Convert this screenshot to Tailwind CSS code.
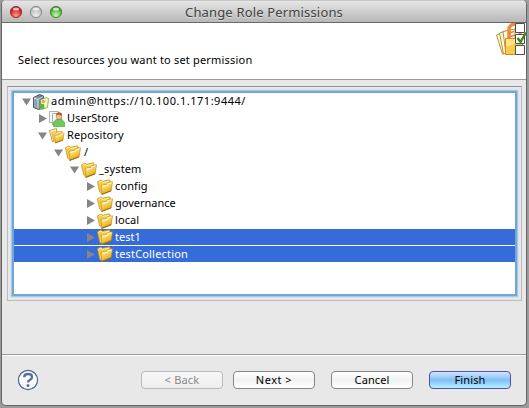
<!DOCTYPE html>
<html lang="en">
<head>
<meta charset="utf-8">
<title>Change Role Permissions</title>
<script src="https://cdn.jsdelivr.net/npm/@tailwindcss/browser@4"></script>
</head>
<body class="h-[408px] w-[529px] overflow-hidden bg-[#9b9b9b] font-['Noto_Sans','Open_Sans',sans-serif] text-[11px] text-black">
<svg class="absolute h-0 w-0" aria-hidden="true">
  <defs>
    <linearGradient id="gold" x1="0" y1="0" x2=".5" y2="1"><stop offset="0" stop-color="#fdeb96"/><stop offset=".45" stop-color="#f9d95c"/><stop offset="1" stop-color="#e0a01a"/></linearGradient>
    <linearGradient id="server" x1="0" y1="0" x2="1" y2="0"><stop offset="0" stop-color="#9fb2bf"/><stop offset="1" stop-color="#54697a"/></linearGradient>
    <symbol id="folder" viewBox="0 0 16 16">
      <path d="M.4 2.800 4 1l1.500 1.200L12.500.8l1.200 3L5 15.300 2.600 13z" fill="#f5cb48" stroke="#c08c18" stroke-width=".7"/>
      <path d="M1.500 3.500 4 2l1.500 1.500 6.500-1.200" fill="none" stroke="#fff2ae" stroke-width=".9"/>
      <path d="M4 6.400 9.600 5.400l1.200-1.800 4.700-.8-1.300 8.900L5 15.500z" fill="url(#gold)" stroke="#b98314" stroke-width=".6"/>
      <path d="m5 7.200 5-.8 1.300-1.900 3.300-.5" fill="none" stroke="#fffbe0" stroke-width="1.100"/>
      <path d="m4.800 15.300 9.400-3.500" stroke="#96660a"/>
    </symbol>
    <symbol id="down" viewBox="0 0 9 8"><path d="M0 .5h9L4.500 7.500z" fill="#858585"/></symbol>
    <symbol id="right" viewBox="0 0 8 9"><path d="M0 0v9l8-4.500z" fill="#858585"/></symbol>
  </defs>
</svg>
<div class="flex h-[408px] w-[529px] flex-col pr-[2px] pb-[2px] pl-[1px]">
<main class="flex h-[406px] w-[526px] flex-col overflow-hidden rounded-t-[5px] rounded-b-[5px] border-x border-b border-[#656565] bg-[#e8e8e8]">
  <header class="relative flex h-[23px] shrink-0 items-center justify-center border-t border-b border-t-[#c7c7c7] border-b-[#696969] bg-linear-to-b from-[#e6e6e6] to-[#b7b7b7]">
    <svg class="absolute top-0 left-0" width="70" height="22">
      <defs>
        <radialGradient id="r" cx=".5" cy=".8" r=".7"><stop stop-color="#ff9a94"/><stop offset=".6" stop-color="#ec3a3a"/><stop offset="1" stop-color="#a91c20"/></radialGradient>
        <radialGradient id="w" cx=".5" cy=".8" r=".7"><stop stop-color="#eee"/><stop offset="1" stop-color="#b5b5b5"/></radialGradient>
        <radialGradient id="g" cx=".5" cy=".8" r=".7"><stop stop-color="#c0ff9e"/><stop offset=".6" stop-color="#72c65a"/><stop offset="1" stop-color="#398a2d"/></radialGradient>
      </defs>
      <g stroke-width="1"><circle cx="14" cy="11" r="5.600" fill="url(#r)" stroke="#943337"/><circle cx="34" cy="11" r="5.600" fill="url(#w)" stroke="#888"/><circle cx="54" cy="11" r="5.600" fill="url(#g)" stroke="#477f3e"/></g>
      <g fill="#fff" fill-opacity=".7"><ellipse cx="14" cy="8" rx="3" ry="1.500"/><ellipse cx="34" cy="8" rx="3" ry="1.500"/><ellipse cx="54" cy="8" rx="3" ry="1.500"/></g>
    </svg>
    <h1 class="text-[13px] leading-[20px] tracking-[0.160px] whitespace-nowrap text-[#404040] [text-shadow:0_1px_0_#ffffff80]">Change Role Permissions</h1>
  </header>
  <section class="relative h-[57px] shrink-0 border-b border-[#999] bg-white pt-[29px] pl-[16px]">
    <p class="leading-[16px] tracking-[0.190px] whitespace-nowrap">Select resources you want to set permission</p>
    <svg class="absolute top-0 right-0" width="31" height="34" viewBox="0 0 31 34">
      <g stroke="#b0933c" fill="#fffbe0"><path d="m1.500 12 5-2 5 20-4 1z"/><path d="m4.500 10 6-2 4 21-6 2z"/><path d="M8 8.500 20 6v22l-9 3z"/></g>
      <path d="M14 15V6.500c0-7 11-7 11 0V15" fill="none" stroke="#f28a3e" stroke-width="3.500"/><path d="m14 10 5-1.500M14 14l6-2" stroke="#e9823c" stroke-width="1.500"/>
      <path d="M10.500 15.500h17v16h-17z" fill="#f9cb4c" stroke="#ed7d20"/><path d="M11 23c6 1 8-4 14-4v-3H11z" fill="#ffe681"/>
      <g fill="#fff" stroke="#4e4e4e"><path d="M20.500.5h9v9h-9zM20.500 11.500h9v9h-9zM20.500 22.500h9v9h-9z"/></g>
      <path d="m22.500 15 3 4 5.500-9.500" fill="none" stroke="#368516" stroke-width="2.300"/>
    </svg>
  </section>
  <section class="h-[275px] shrink-0 border-b border-[#999] pt-[6px] pl-[5px]">
    <div class="h-[215px] w-[515px] border border-t-[#929292] border-r-[#bbb] border-b-[#bbb] border-l-[#bbb] pt-[6px] pl-[6px]">
      <div role="tree" class="h-[201px] w-[501px] bg-white shadow-[0_0_0_2px_#70a7d8,0_0_0_3px_#a8c9e5,0_0_2px_3px_#bed5e8]">
        <div class="flex h-[17px] items-center pl-[8px]"><svg class="h-[8px] w-[9px]"><use href="#down"/></svg>
          <svg class="ml-[2px]" width="16" height="16" viewBox="0 0 16 16"><path d="m.5 3.500 6-3 4 1.500v12l-5 1.500-5-2z" fill="url(#server)" stroke="#465c6b"/><path d="m1 4 4 1.500v9M5 5.500l5-3" fill="none" stroke="#dce6ec"/><path d="m7.500 6 5.500-2.500 2.500 1-1 9-6 2z" fill="#f4f7c4" stroke="#77a93d" stroke-width=".8"/><circle cx="10.500" cy="7.500" r="1.700" fill="#f0a35e"/><path d="m6.500 15 .5-5h4l.5 5z" fill="#5fb83e"/></svg>
          <span class="ml-[2px] tracking-[0.520px] whitespace-nowrap">admin@https://10.100.1.171:9444/</span></div>
        <div class="flex h-[17px] items-center pl-[25px]"><svg class="h-[9px] w-[8px]"><use href="#right"/></svg>
          <svg class="ml-[2px]" width="16" height="16" viewBox="0 0 16 16"><path d="M.5.500h9v11h-9zM3.500 2.500h9v11h-9z" fill="#f6f7f5" stroke="#a9b5a8"/><path d="M4.500 15.500v-4L7 8.500h6l2.500 3v4z" fill="#6cc95a" stroke="#4aa548" stroke-width=".7"/><circle cx="10" cy="5.500" r="2.800" fill="#f5bd84" stroke="#b56a3c" stroke-width=".5"/><path d="M7 4.500c0-4.500 6-4.500 6 0-2 0-3-1-4-1z" fill="#b0562d"/></svg>
          <span class="ml-[2px] tracking-[0.050px]">UserStore</span></div>
        <div class="flex h-[17px] items-center pl-[24px]"><svg class="h-[8px] w-[9px]"><use href="#down"/></svg>
          <svg class="ml-[2px]" width="16" height="16" viewBox="0 0 16 16"><path d="m.5 2.500 7-2 1 9-5 4.500z" fill="#fff6ce" stroke="#ca9c44"/><use href="#folder" x="2" y="2.500" width="14" height="13"/></svg>
          <span class="ml-[2px] tracking-[0.150px]">Repository</span></div>
        <div class="flex h-[17px] items-center pl-[40px]"><svg class="h-[8px] w-[9px]"><use href="#down"/></svg><svg class="ml-[2px] h-4 w-4"><use href="#folder"/></svg><span class="ml-[3px]">/</span></div>
        <div class="flex h-[17px] items-center pl-[56px]"><svg class="h-[8px] w-[9px]"><use href="#down"/></svg><svg class="ml-[2px] h-4 w-4"><use href="#folder"/></svg><span class="ml-[2px] tracking-[0.150px]">_system</span></div>
        <div class="flex h-[17px] items-center pl-[73px]"><svg class="h-[9px] w-[8px]"><use href="#right"/></svg><svg class="ml-[2px] h-4 w-4"><use href="#folder"/></svg><span class="ml-[2px] tracking-[0.100px]">config</span></div>
        <div class="flex h-[17px] items-center pl-[73px]"><svg class="h-[9px] w-[8px]"><use href="#right"/></svg><svg class="ml-[2px] h-4 w-4"><use href="#folder"/></svg><span class="ml-[2px]">governance</span></div>
        <div class="flex h-[17px] items-center pl-[73px]"><svg class="h-[9px] w-[8px]"><use href="#right"/></svg><svg class="ml-[2px] h-4 w-4"><use href="#folder"/></svg><span class="ml-[2px] tracking-[0.100px]">local</span></div>
        <div class="mb-px flex h-[16px] items-center bg-[#366cd9] pl-[73px] text-white"><svg class="h-[9px] w-[8px]"><use href="#right"/></svg><svg class="ml-[2px] h-4 w-4"><use href="#folder"/></svg><span class="ml-[2px]">test1</span></div>
        <div class="flex h-[16px] items-center bg-[#366cd9] pl-[73px] text-white"><svg class="h-[9px] w-[8px]"><use href="#right"/></svg><svg class="ml-[2px] h-4 w-4"><use href="#folder"/></svg><span class="ml-[2px] tracking-[0.180px]">testCollection</span></div>
      </div>
    </div>
  </section>
  <footer class="flex h-[50px] shrink-0 items-start border-t border-white pt-[15px] pl-[15px] leading-[16px]">
    <svg class="-mt-[2px] mr-[102px]" width="22" height="22" viewBox="0 0 22 22" aria-label="Help"><circle cx="11" cy="11" r="9.600" fill="#fafafa" stroke="#4d6790" stroke-width="1.200"/><path d="M7.200 8.200c0-4.200 7.800-4.200 7.800 0 0 2.800-4 2.300-4 5.300" fill="none" stroke="#5a7299" stroke-width="2.400"/><circle cx="11" cy="16.500" r="1.500" fill="#5a7299"/></svg>
    <button class="mr-[10px] h-[18px] w-[82px] rounded-[4px] border border-[#b9b9b9] bg-linear-to-b from-[#f7f7f7] to-[#eee] leading-[16px] tracking-[0.200px] text-[#888]">&lt; Back</button>
    <button class="mr-[16px] h-[18px] w-[82px] rounded-[4px] border border-[#888] bg-linear-to-b from-white via-[#f2f2f2] to-white leading-[16px] tracking-[0.500px]">Next &gt;</button>
    <button class="mr-[16px] h-[18px] w-[82px] rounded-[4px] border border-[#888] bg-linear-to-b from-white via-[#f2f2f2] to-white leading-[16px] tracking-[0.100px]">Cancel</button>
    <button class="h-[18px] w-[82px] rounded-[4px] border border-[#5650a6] bg-linear-to-b from-[#d0e7fb] via-[#80bff7] to-[#b5f0ff] leading-[16px] tracking-[0.100px]">Finish</button>
  </footer>
</main>
</div>
</body>
</html>
